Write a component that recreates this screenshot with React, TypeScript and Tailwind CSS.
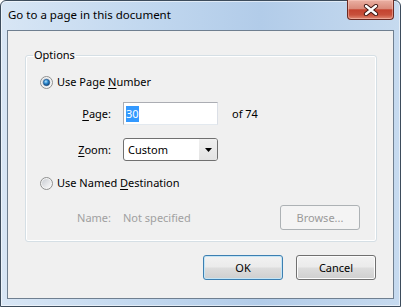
import React, { useId } from "react";

function Radio({ checked }: { checked: boolean }) {
  const id = useId().replace(/:/g, "");
  return (
    <svg width="13" height="13" viewBox="0 0 13 13" className="shrink-0">
      <defs>
        <linearGradient id={`f${id}`} x1="0" y1="0" x2="1" y2="1">
          <stop offset="0" stopColor="#c9cdd3" />
          <stop offset="1" stopColor="#fbfbfb" />
        </linearGradient>
        <radialGradient id={`d${id}`} cx="0.4" cy="0.35" r="0.7">
          <stop offset="0" stopColor="#b4e2fa" />
          <stop offset="0.45" stopColor="#2d8ad0" />
          <stop offset="1" stopColor="#0d3a6b" />
        </radialGradient>
      </defs>
      <circle cx="6.5" cy="6.5" r="6" fill="#f4f4f4" stroke="#8e8f8f" />
      <circle cx="6.5" cy="6.5" r="4.6" fill={`url(#f${id})`} />
      {checked && (
        <circle cx="6.5" cy="6.5" r="3.2" fill={`url(#d${id})`} stroke="#1b4f86" strokeWidth="0.6" />
      )}
    </svg>
  );
}

function Button({
  children,
  primary,
  disabled,
}: {
  children: React.ReactNode;
  primary?: boolean;
  disabled?: boolean;
}) {
  if (disabled) {
    return (
      <div className="flex h-[25px] w-[80px] items-center justify-center rounded-[3px] border border-[#adb2b5] bg-[#f4f4f4] text-[#9a9a9a]">
        {children}
      </div>
    );
  }
  return (
    <div
      className={`flex h-[25px] w-[80px] items-center justify-center rounded-[3px] border bg-[linear-gradient(to_bottom,#f2f2f2_0%,#ebebeb_48%,#dddddd_52%,#cfcfcf_100%)] text-black ${
        primary
          ? "border-[#3c7fb1] shadow-[inset_0_0_0_1px_#c4e5f6]"
          : "border-[#707070] shadow-[inset_0_0_0_1px_#fcfcfc]"
      }`}
    >
      {children}
    </div>
  );
}

export default function App() {
  return (
    <div className="flex h-[307px] w-[401px] flex-col rounded-t-[6px] border border-[#3d4c5c] bg-[linear-gradient(to_right,#d8e6f5_0%,#c2d8ef_35%,#b2cce9_65%,#c6daef_100%)] px-[6px] pb-[7px] font-['Noto_Sans',sans-serif] text-[11px] leading-[16px] text-black shadow-[inset_0_0_0_1px_rgba(255,255,255,0.55)]">
      <div className="flex h-[29px] shrink-0 items-start justify-between">
        <div className="flex h-full items-center pl-[1px] pb-[1px] text-[11.5px]">
          Go to a page in this document
        </div>
        <div className="-mt-px flex h-[20px] w-[47px] items-center justify-center rounded-b-[4px] border border-t-0 border-[#6b2a22] bg-[linear-gradient(to_bottom,#eab0a3_0%,#da8b7b_45%,#c4432f_52%,#c8503b_78%,#e18a74_100%)] shadow-[inset_0_0_0_1px_rgba(255,210,200,0.45)]">
          <svg width="16" height="12" viewBox="0 0 16 12">
            <path d="M3 2 L13 10 M13 2 L3 10" stroke="#3b1410" strokeWidth="4.2" strokeLinecap="round" />
            <path d="M3 2 L13 10 M13 2 L3 10" stroke="#ffffff" strokeWidth="2.4" strokeLinecap="round" />
          </svg>
        </div>
      </div>

      <div className="flex flex-1 flex-col border border-[#6f7f90] bg-[#f0f0f0]">
        <fieldset className="mt-[16px] ml-[17px] mr-[16px] rounded-[3px] border border-[#d5dfe5] shadow-[inset_0_0_0_1px_#ffffff]">
          <legend className="ml-[7px] px-[1px]">Options</legend>
          <div className="flex flex-col pt-[11px] pb-[11px]">
            <div className="flex h-[16px] items-center gap-[4px] pl-[14px]">
              <Radio checked />
              <span>
                Use Page <span className="underline underline-offset-2">N</span>umber
              </span>
            </div>

            <div className="mt-[12px] flex h-[23px] items-center">
              <div className="w-[85px] text-right">
                <span className="underline underline-offset-2">P</span>age:
              </div>
              <div className="ml-[12px] flex h-[23px] w-[95px] items-center border border-[#abadb3] border-r-[#dbdfe6] border-b-[#e3e9ef] bg-white pl-[2px]">
                <span className="bg-[#3399ff] text-white">30</span>
              </div>
              <div className="ml-[14px]">of 74</div>
            </div>

            <div className="mt-[13px] flex h-[23px] items-center">
              <div className="w-[85px] text-right">
                <span className="underline underline-offset-2">Z</span>oom:
              </div>
              <div className="ml-[12px] flex h-[23px] w-[95px] overflow-hidden rounded-[3px] border border-[#707070] bg-white">
                <div className="flex flex-1 items-center pl-[4px]">Custom</div>
                <div className="flex w-[18px] items-center justify-center bg-[linear-gradient(to_bottom,#f0f0f0,#e3e3e3)]">
                  <svg width="7" height="4" viewBox="0 0 7 4">
                    <path d="M0 0 H7 L3.5 4 Z" fill="#000000" />
                  </svg>
                </div>
              </div>
            </div>

            <div className="mt-[14px] flex h-[16px] items-center gap-[4px] pl-[14px]">
              <Radio checked={false} />
              <span>
                Use Named <span className="underline underline-offset-2">D</span>estination
              </span>
            </div>

            <div className="mt-[14px] flex h-[25px] items-center pr-[16px]">
              <div className="w-[85px] text-right text-[#a0a0a0]">Name:</div>
              <div className="ml-[12px] text-[#a0a0a0]">Not specified</div>
              <div className="ml-auto">
                <Button disabled>Browse...</Button>
              </div>
            </div>
          </div>
        </fieldset>

        <div className="mt-[13px] mr-[17px] flex justify-end gap-[13px]">
          <Button primary>OK</Button>
          <Button>Cancel</Button>
        </div>
      </div>
    </div>
  );
}
